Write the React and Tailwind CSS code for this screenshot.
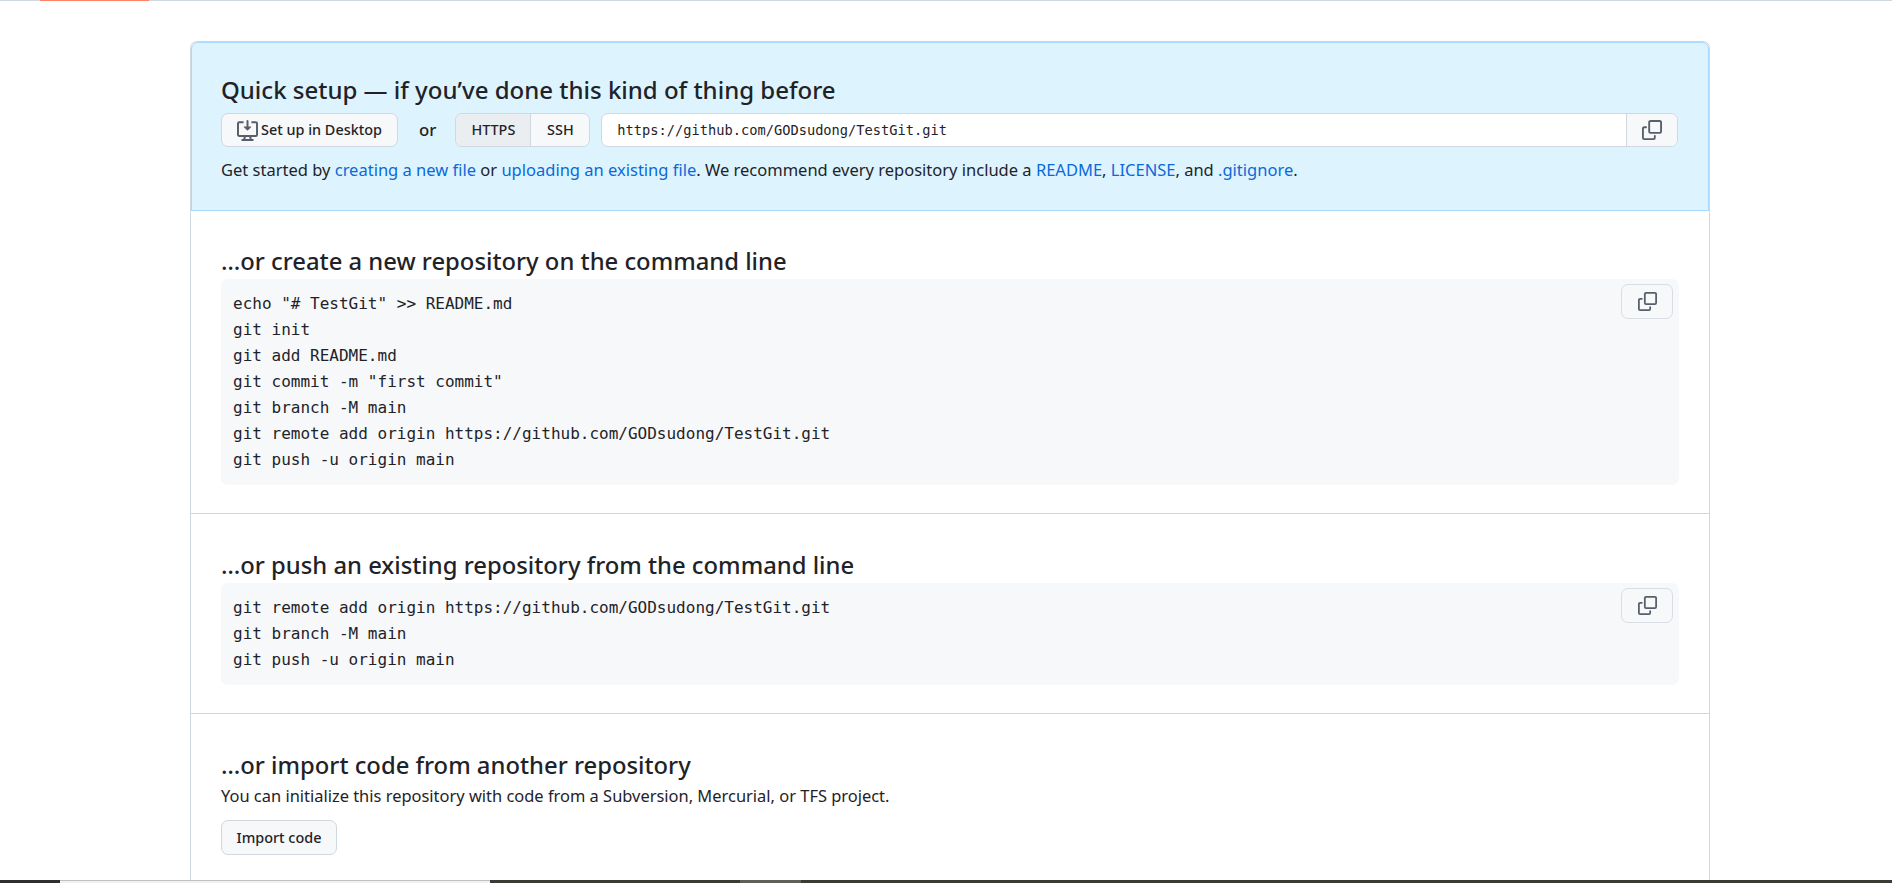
const sans = "font-['Noto_Sans','Open_Sans',sans-serif]";

const CopyIcon = ({ className }) => (
  <svg viewBox="0 0 16 16" fill="currentColor" className={className}>
    <path d="M0 6.75C0 5.784.784 5 1.75 5h1.5a.75.75 0 0 1 0 1.5h-1.5a.25.25 0 0 0-.25.25v7.5c0 .138.112.25.25.25h7.5a.25.25 0 0 0 .25-.25v-1.5a.75.75 0 0 1 1.5 0v1.5A1.75 1.75 0 0 1 9.25 16h-7.5A1.75 1.75 0 0 1 0 14.25Z" />
    <path d="M5 1.75C5 .784 5.784 0 6.75 0h7.5C15.216 0 16 .784 16 1.75v7.5A1.75 1.75 0 0 1 14.25 11h-7.5A1.75 1.75 0 0 1 5 9.25Zm1.75-.25a.25.25 0 0 0-.25.25v7.5c0 .138.112.25.25.25h7.5a.25.25 0 0 0 .25-.25v-7.5a.25.25 0 0 0-.25-.25Z" />
  </svg>
);

const DesktopIcon = ({ className }) => (
  <svg viewBox="0 0 16 16" fill="currentColor" className={className}>
    <path d="M8.75 5V.75a.75.75 0 0 0-1.5 0V5H5.41a.25.25 0 0 0-.18.43l2.59 2.59c.1.1.26.1.36 0l2.59-2.59a.25.25 0 0 0-.18-.43Z" />
    <path d="M1.75 1A1.75 1.75 0 0 0 0 2.75v8.5C0 12.216.784 13 1.75 13h3.4l-.4 1.5H4a.75.75 0 0 0 0 1.5h8a.75.75 0 0 0 0-1.5h-.75l-.4-1.5h3.4A1.75 1.75 0 0 0 16 11.25v-8.5A1.75 1.75 0 0 0 14.25 1H11v1.5h3.25c.138 0 .25.112.25.25v8.5a.25.25 0 0 1-.25.25H1.75a.25.25 0 0 1-.25-.25v-8.5a.25.25 0 0 1 .25-.25H5V1Zm5 12h2.5l.4 1.5H6.35Z" />
  </svg>
);

const SectionTitle = ({ children }) => (
  <h3 className="text-[23.8px] leading-[30px] font-medium text-[#1f2328]">{children}</h3>
);

const CodeBlock = ({ lines }) => (
  <div className="relative mt-[3px] rounded-[7px] bg-[#f6f8fa] py-[12px] pl-[12px] pr-[11px]">
    <pre className="font-['DejaVu_Sans_Mono',monospace] text-[16px] leading-[26px] text-[#1f2328]">{lines.join("\n")}</pre>
    <button className="absolute right-[6px] top-[5px] flex h-[35px] w-[52px] items-center justify-center rounded-[7px] border border-[#d8dee4] bg-[#f6f8fa] text-[#57606a]">
      <CopyIcon className="h-[19px] w-[19px]" />
    </button>
  </div>
);

export default function App() {
  return (
    <div className={`relative h-[883px] overflow-hidden bg-white ${sans}`}>
      {/* loading bar at the top */}
      <div className="h-px bg-[#d0d7de]">
        <div className="ml-[40px] h-px w-[109px] bg-[#ff8266]" />
      </div>

      <div className="mx-[190px] mt-[40px] h-[900px] w-[1520px] rounded-t-[7px] border-x border-t border-[#d0d7de]">
        {/* Quick setup */}
        <div className="h-[169px] rounded-t-[7px] border-b border-[#a8daff] bg-[#ddf4ff] px-[30px] pt-[32px] outline outline-1 -outline-offset-1 outline-[#a8daff]">
          <h3 className="text-[24px] leading-[31px] font-medium text-[#1f2328]">Quick setup — if you’ve done this kind of thing before</h3>
          <div className="mt-[8px] flex h-[34px] items-stretch">
            <button className="flex w-[177px] items-center justify-center gap-[3px] rounded-[7px] border border-[#d0d7de] bg-[#f6f8fa] text-[14.4px] font-medium text-[#1f2328]">
              <DesktopIcon className="h-[21px] w-[21px] text-[#57606a]" />
              Set up in Desktop
            </button>
            <span className="ml-[21px] flex items-center text-[16.8px] font-medium text-[#1f2328]">or</span>
            <div className="ml-[19px] flex w-[135px] rounded-[7px] border border-[#d0d7de] text-[14.4px] font-medium text-[#1f2328]">
              <span className="flex w-[75px] items-center justify-center rounded-l-[6px] border-r border-[#d0d7de] bg-[#ebeef1]">HTTPS</span>
              <span className="flex flex-1 items-center justify-center rounded-r-[6px] bg-[#f6f8fa]">SSH</span>
            </div>
            <div className="ml-[11px] mr-[1px] flex flex-1 rounded-[7px] border border-[#d0d7de] bg-white">
              <span className="flex flex-1 items-center pl-[15px] font-['DejaVu_Sans_Mono',monospace] text-[13.7px] text-[#1f2328]">https://github.com/GODsudong/TestGit.git</span>
              <span className="flex w-[51px] items-center justify-center rounded-r-[6px] border-l border-[#d0d7de] bg-[#f6f8fa] text-[#57606a]">
                <CopyIcon className="h-[20px] w-[20px]" />
              </span>
            </div>
          </div>
          <p className="mt-[10px] text-[16.5px] leading-[26px] text-[#1f2328]">
            Get started by <a className="text-[#0969da]">creating a new file</a> or <a className="text-[#0969da]">uploading an existing file</a>. We recommend every repository include a <a className="text-[#0969da]">README</a>, <a className="text-[#0969da]">LICENSE</a>, and <a className="text-[#0969da]">.gitignore</a>.
          </p>
        </div>

        {/* Command line */}
        <div className="h-[303px] border-b border-[#d0d7de] px-[30px] pt-[35px]">
          <SectionTitle>…or create a new repository on the command line</SectionTitle>
          <CodeBlock
            lines={[
              'echo "# TestGit" >> README.md',
              "git init",
              "git add README.md",
              'git commit -m "first commit"',
              "git branch -M main",
              "git remote add origin https://github.com/GODsudong/TestGit.git",
              "git push -u origin main",
            ]}
          />
        </div>

        {/* Existing repository */}
        <div className="h-[200px] border-b border-[#d0d7de] px-[30px] pt-[36px]">
          <SectionTitle>…or push an existing repository from the command line</SectionTitle>
          <CodeBlock
            lines={[
              "git remote add origin https://github.com/GODsudong/TestGit.git",
              "git branch -M main",
              "git push -u origin main",
            ]}
          />
        </div>

        {/* Import */}
        <div className="px-[30px] pt-[36px]">
          <SectionTitle>…or import code from another repository</SectionTitle>
          <p className="mt-[3px] text-[16.45px] leading-[26px] text-[#1f2328]">You can initialize this repository with code from a Subversion, Mercurial, or TFS project.</p>
          <button className="mt-[11px] flex h-[35px] w-[116px] items-center justify-center rounded-[7px] border border-[#d0d7de] bg-[#f6f8fa] text-[14.4px] font-medium text-[#1f2328]">Import code</button>
        </div>
      </div>

      {/* strip of the OS taskbar at the bottom edge */}
      <div className="absolute inset-x-0 bottom-0 flex h-[3px] bg-[#3b3b35]">
        <div className="w-[60px] bg-[#2f2f2f]" />
        <div className="w-[430px] border-t border-[#c0c0c0] bg-[#f0f0f0]" />
        <div className="ml-[250px] w-[61px] bg-[#5f605a]" />
      </div>
    </div>
  );
}
